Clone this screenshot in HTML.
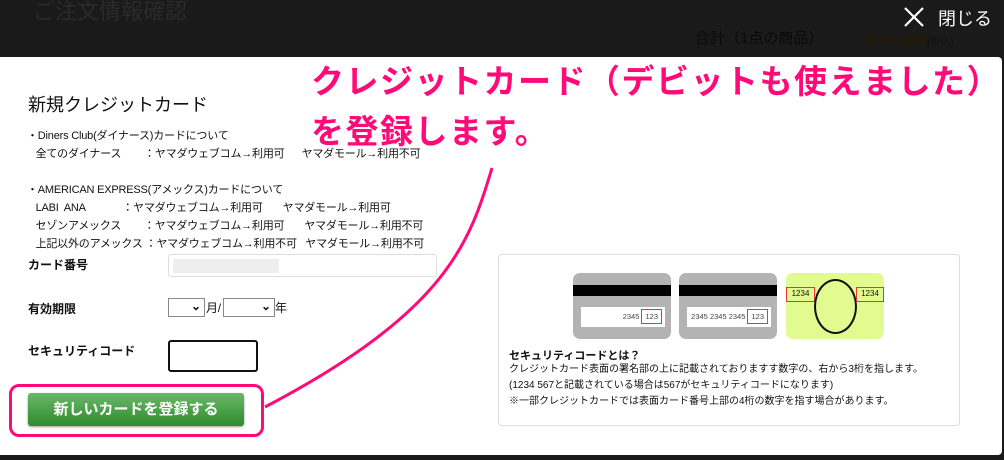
<!DOCTYPE html>
<html><head><meta charset="utf-8"><style>
*{margin:0;padding:0;box-sizing:border-box}
body{width:1004px;height:460px;overflow:hidden;background:#1a1a1a;position:relative;font-family:"Liberation Sans","Noto Sans CJK JP",sans-serif;color:#111}
.a{position:absolute}
.modal{left:0;top:57px;width:1002px;height:398px;background:#fff;border-radius:0 4px 4px 0}
.t{font-size:11px;white-space:pre;line-height:18px;letter-spacing:-0.2px}
.lbl{font-size:12px;font-weight:bold}
.pink{color:#ff0a78;font-size:33px;font-weight:bold;white-space:nowrap;letter-spacing:1.5px}
.card{width:98px;height:66px;border-radius:7px;background:#b3b3b3;overflow:hidden}
.sm{font-size:11px;line-height:16px;white-space:nowrap}
.num{margin:11px 0 0 8px;width:84px;height:20px;background:#fff;font-size:7.5px;text-align:right;line-height:20px;padding-right:3px;color:#444;white-space:nowrap}
</style></head><body>
<div class="a" style="left:33px;top:-6px;font-size:22px;color:#2a2a2a">ご注文情報確認</div>
<div class="a" style="left:695px;top:27px;font-size:15px;color:#0a0a0a">合計（1点の商品）</div>
<div class="a" style="left:862px;top:26px;font-size:16px;color:#251a06;font-weight:bold">￥44,640<span style="font-size:10px;font-weight:normal;color:#111">(税込)</span></div>
<svg class="a" style="left:903px;top:6px" width="22" height="22"><path d="M2 2L20 20M20 2L2 20" stroke="#fff" stroke-width="2.2"/></svg>
<div class="a" style="left:938px;top:5px;font-size:18px;color:#fff">閉じる</div>
<div class="a modal"></div>
<div class="a" style="left:28px;top:91px;font-size:18px">新規クレジットカード</div>
<div class="a t" style="left:27px;top:127px">・Diners Club(ダイナース)カードについて
   全てのダイナース        ：ヤマダウェブコム→利用可      ヤマダモール→利用不可

・AMERICAN EXPRESS(アメックス)カードについて
   LABI  ANA             ：ヤマダウェブコム→利用可       ヤマダモール→利用可
   セゾンアメックス        ：ヤマダウェブコム→利用可       ヤマダモール→利用不可
   上記以外のアメックス ：ヤマダウェブコム→利用不可   ヤマダモール→利用不可</div>
<div class="a lbl" style="left:28px;top:256px">カード番号</div>
<div class="a" style="left:168px;top:254px;width:269px;height:23px;border:1px solid #ddd;border-radius:3px"><div style="margin:4px 4px;width:106px;height:14px;background:#eee"></div></div>
<div class="a lbl" style="left:28px;top:300px">有効期限</div>
<div class="a" style="left:168px;top:298px;width:37px;height:19px;border:1px solid #888;font-size:12px;font-weight:bold;text-align:right;padding-right:3px;line-height:14px">⌄</div>
<div class="a t" style="left:206px;top:299px;font-size:12px">月/</div>
<div class="a" style="left:223px;top:298px;width:52px;height:19px;border:1px solid #888;font-size:12px;font-weight:bold;text-align:right;padding-right:3px;line-height:14px">⌄</div>
<div class="a t" style="left:275px;top:299px;font-size:12px">年</div>
<div class="a lbl" style="left:28px;top:342px">セキュリティコード</div>
<div class="a" style="left:168px;top:340px;width:90px;height:32px;border:2px solid #111;border-radius:3px"></div>
<div class="a" style="left:9px;top:384px;width:255px;height:53px;border:3px solid #ff0a78;border-radius:10px"></div>
<div class="a" style="left:28px;top:393px;width:216px;height:33px;border-radius:3px;background:linear-gradient(#6ab868,#2e8b2e);color:#fff;font-weight:bold;font-size:15px;text-align:center;line-height:33px;box-shadow:0 1px 2px #999">新しいカードを登録する</div>
<svg class="a" style="left:0;top:0" width="1004" height="460"><path d="M492 168C470 240 450 310 265 407" stroke="#ff0a78" stroke-width="3" fill="none"/></svg>
<div class="a pink" style="left:311px;top:55px">クレジットカード（デビットも使えました）</div>
<div class="a pink" style="left:311px;top:105px">を登録します。</div>
<div class="a" style="left:498px;top:254px;width:462px;height:172px;border:1px solid #ddd;border-radius:4px"></div>
<div class="a card" style="left:573px;top:273px"><div style="height:11px;margin-top:12px;background:#000"></div><div class="num">2345 <span style="border:1.5px solid #e33;padding:2px 3px">123</span></div></div>
<div class="a card" style="left:679px;top:273px"><div style="height:11px;margin-top:12px;background:#000"></div><div class="num">2345 2345 2345 <span style="border:1.5px solid #e33;padding:2px 3px">123</span></div></div>
<div class="a card" style="left:786px;top:273px;background:#e2fb91"><div class="a" style="left:0;top:14px;width:29px;height:15px;border:1.5px solid #e33;font-size:8px;line-height:12px;text-align:center">1234</div><div class="a" style="left:28px;top:6px;width:43px;height:55px;border:2px solid #111;border-radius:50%"></div><div class="a" style="left:70px;top:14px;width:28px;height:15px;border:1.5px solid #e33;font-size:8px;line-height:12px;text-align:center">1234</div></div>
<div class="a sm" style="left:509px;top:348px;font-weight:bold">セキュリティコードとは？</div>
<div class="a sm" style="left:509px;top:362px;font-size:10px">クレジットカード表面の署名部の上に記載されておりますす数字の、右から3桁を指します。<br>(1234 567と記載されている場合は567がセキュリティコードになります)<br>※一部クレジットカードでは表面カード番号上部の4桁の数字を指す場合があります。</div>
</body></html>
